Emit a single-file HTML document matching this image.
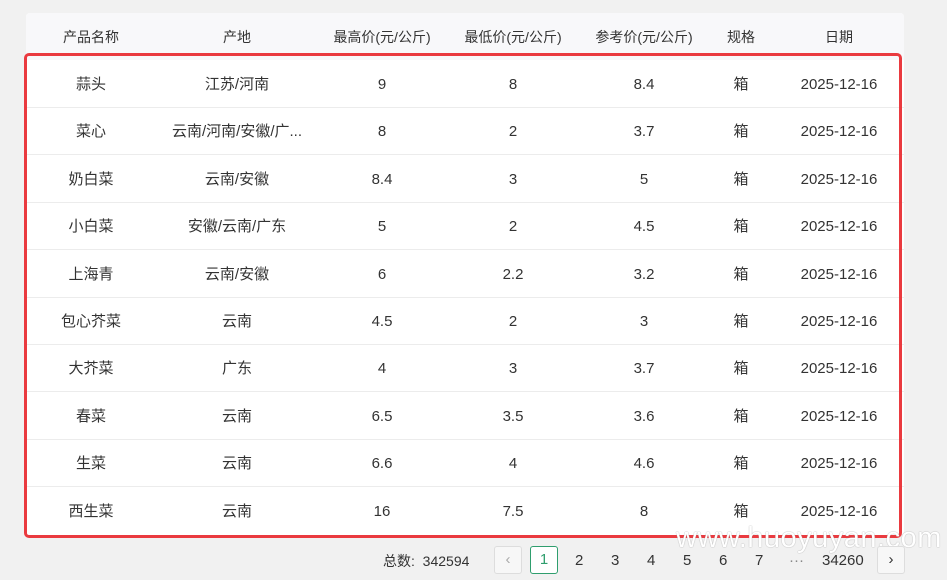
<!DOCTYPE html><html><head><meta charset="utf-8"><style>
body{margin:0;width:947px;height:580px;background:#f1f1f1;font-family:"Liberation Sans","Noto Sans CJK SC",sans-serif;color:#333;font-size:15px;position:relative;overflow:hidden}
.card{position:absolute;left:26px;top:13px;width:878px;height:522px;background:#fff;border-radius:4px}
.hd{position:absolute;left:0;top:0;width:878px;height:47px;background:#f8f8fa;border-radius:4px 4px 0 0}
.row{position:absolute;left:0;width:878px;height:47px;border-bottom:1px solid #ececec}
.c{position:absolute;top:1px;height:47px;line-height:47px;text-align:center;white-space:nowrap}
.hd .c{top:1px;font-size:14px}
.red{position:absolute;left:24px;top:53px;width:872px;height:479px;border:3px solid #ea3a3f;border-radius:5px}
.pg{position:absolute;top:547px;height:28px;line-height:28px;font-size:15px;color:#333}
.box{position:absolute;top:546px;width:26px;height:26px;border:1px solid #ddd;border-radius:3px;background:#f7f7f7;text-align:center;line-height:26px;color:#aaa}
.wm{position:absolute;left:676px;top:522px;font-size:29px;color:#fff;letter-spacing:0.5px;text-shadow:0 0 1px #888}
</style></head><body>
<div class="card">
<div class="hd">
<div class="c" style="left:0;width:130px">产品名称</div>
<div class="c" style="left:130px;width:162px">产地</div>
<div class="c" style="left:292px;width:128px">最高价(元/公斤)</div>
<div class="c" style="left:420px;width:134px">最低价(元/公斤)</div>
<div class="c" style="left:554px;width:128px">参考价(元/公斤)</div>
<div class="c" style="left:682px;width:66px">规格</div>
<div class="c" style="left:748px;width:130px">日期</div>
</div>
</div>
<div id="rows"></div>
<div class="red"></div>
<div class="wm">www.huoyuyan.com</div>
<div class="pg" style="left:383px;font-size:14px">总数:&nbsp;&nbsp;342594</div>
<div class="box" style="left:494px">&#8249;</div>
<div class="box" style="left:530px;border-color:#2f9e6e;background:#fff;color:#2f9e6e">1</div>
<div class="pg" style="left:575px">2</div><div class="pg" style="left:611px">3</div><div class="pg" style="left:647px">4</div><div class="pg" style="left:683px">5</div><div class="pg" style="left:719px">6</div><div class="pg" style="left:755px">7</div><div class="pg" style="left:789px;color:#888">···</div><div class="pg" style="left:822px">34260</div>
<div class="box" style="left:877px;color:#333;background:#f7f7f7">&#8250;</div>
<script>
var d=[["蒜头","江苏/河南","9","8","8.4"],["菜心","云南/河南/安徽/广...","8","2","3.7"],["奶白菜","云南/安徽","8.4","3","5"],["小白菜","安徽/云南/广东","5","2","4.5"],["上海青","云南/安徽","6","2.2","3.2"],["包心芥菜","云南","4.5","2","3"],["大芥菜","广东","4","3","3.7"],["春菜","云南","6.5","3.5","3.6"],["生菜","云南","6.6","4","4.6"],["西生菜","云南","16","7.5","8"]];
var L=[[0,130],[130,162],[292,128],[420,134],[554,128],[682,66],[748,130]],h="";
d.forEach(function(r,i){var v=r.concat(["箱","2025-12-16"]);h+='<div class="row" style="top:'+(13+47+i*47.4)+'px;left:26px'+(i==9?';border-bottom:none':'')+'">';v.forEach(function(t,j){h+='<div class="c" style="left:'+L[j][0]+'px;width:'+L[j][1]+'px">'+t+'</div>'});h+='</div>'});
document.getElementById("rows").innerHTML=h;
</script>
</body></html>
